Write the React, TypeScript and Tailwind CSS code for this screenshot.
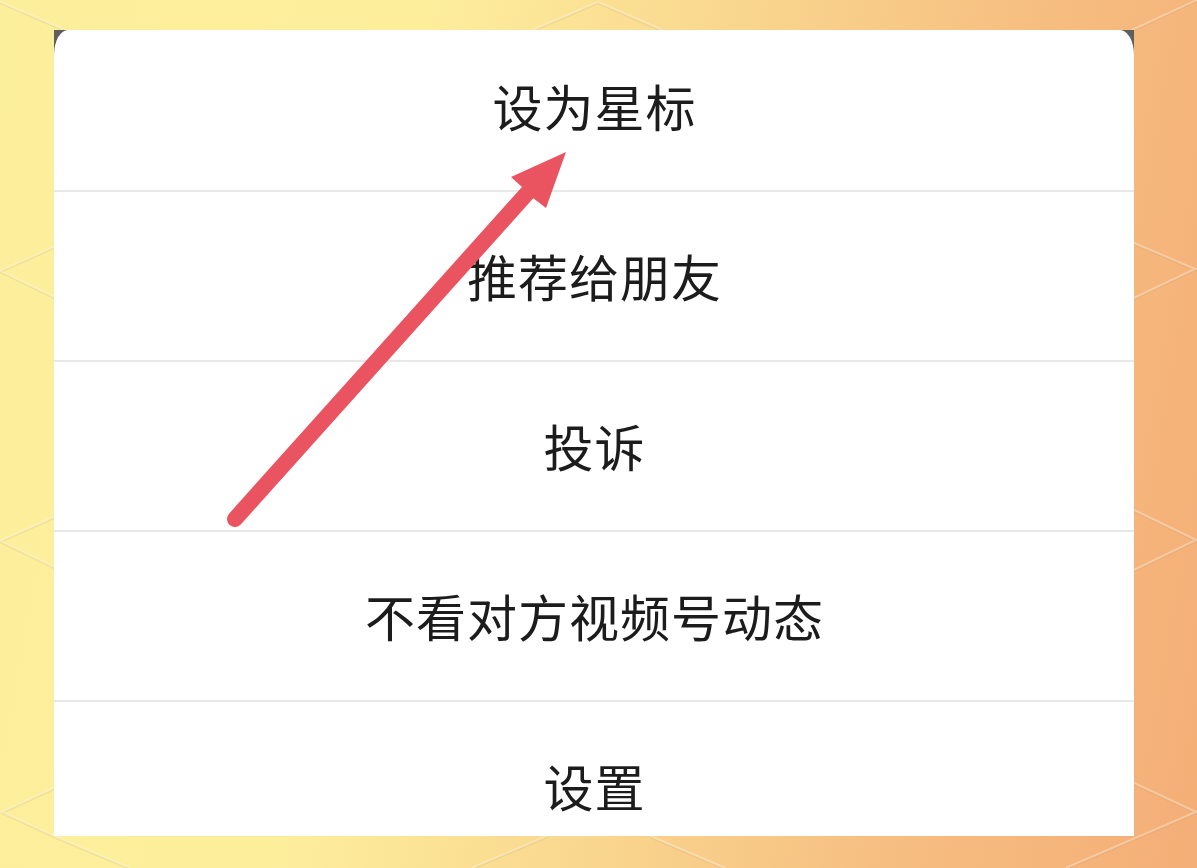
const rows = ["设为星标", "推荐给朋友", "投诉", "不看对方视频号动态", "设置"];

function Row({ label, index }: { label: string; index: number }) {
  if (index === rows.length - 1) {
    return (
      <div className="h-[135px] flex justify-center pt-[54px] leading-[58px] text-[50px]">
        <span className="tracking-[1px] pl-[1px]">{label}</span>
      </div>
    );
  }
  return (
    <div
      className={
        index === 0
          ? "h-[162px] pb-[10px] flex items-center justify-center border-b-2 border-[#e8e8e8] text-[50px]"
          : "h-[170px] pb-[2px] flex items-center justify-center border-b-2 border-[#e8e8e8] text-[50px]"
      }
    >
      <span className="tracking-[1px] pl-[1px]">{label}</span>
    </div>
  );
}

const lines =
  "M0 2L65 30M1197 0L1132 30M54 247L0 271L54 297M1134 243L1195 269L1134 298M54 517L0 541L54 567M1134 510L1196 540L1134 570M54 788L2 812L54 836L130 868M1134 783L1196 812L1066 868M533 30L598 2L662 30M547 836L472 868M650 836L725 868";

export default function App() {
  return (
    <div className="relative w-[1197px] h-[868px] overflow-hidden bg-[linear-gradient(100deg,#fcef9b_0%,#fdee9c_32%,#f9d68e_55%,#f6bd80_78%,#f4ae77_100%)] pt-[30px] pl-[54px]">
      <svg className="absolute inset-0" width="1197" height="868" fill="none">
        <path d={lines} stroke="#a87a30" strokeOpacity="0.14" strokeWidth="2" transform="translate(0 1)" />
        <path d={lines} stroke="#ffffff" strokeOpacity="0.35" strokeWidth="2" />
      </svg>
      <div className="relative w-[1080px] h-[806px] bg-[#5f5f5f]">
        <div
          className="h-full bg-white rounded-tl-[14px_25px] rounded-tr-[14px_25px] text-[#1c1c1c]"
          style={{ fontFamily: '"Noto Sans CJK SC", "Liberation Sans", sans-serif' }}
        >
          {rows.map((r, i) => (
            <Row key={r} label={r} index={i} />
          ))}
        </div>
        <svg className="absolute left-0 top-0" width="1080" height="806" fill="none">
          <path d="M181 489L476 160" stroke="#ea5360" strokeWidth="16" strokeLinecap="round" />
          <path d="M512 122L457 147L468 157L479 168L492 178Z" fill="#ea5360" />
        </svg>
      </div>
    </div>
  );
}
